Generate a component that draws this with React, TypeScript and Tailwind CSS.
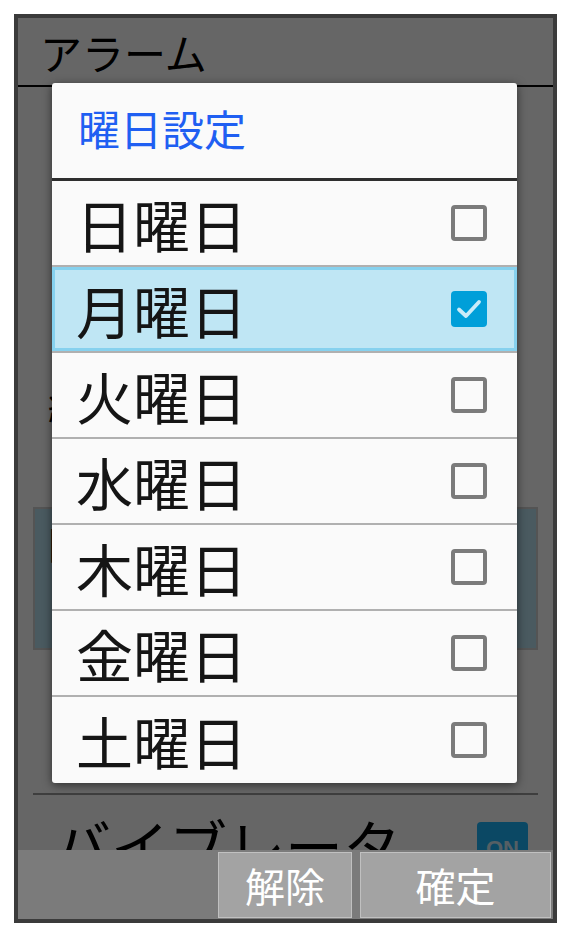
import React from "react";

const days = ["日曜日", "月曜日", "火曜日", "水曜日", "木曜日", "金曜日", "土曜日"];
const jp = { fontFamily: '"Noto Sans CJK JP", "Noto Sans", sans-serif' };

function Check({ checked }: { checked: boolean }) {
  if (checked) {
    return (
      <div className="w-[36px] h-[36px] rounded-[4px] bg-[#009fd9] flex items-center justify-center">
        <svg width="30" height="30" viewBox="0 0 30 30" fill="none">
          <path d="M5 15.5 L12 22 L25 8" stroke="#c9ecf9" strokeWidth="3.8" strokeLinecap="round" strokeLinejoin="round" />
        </svg>
      </div>
    );
  }
  return <div className="w-[36px] h-[36px] rounded-[4px] border-4 border-[#7b7b7b] bg-[#fafafa]" />;
}

export default function App() {
  const [selected, setSelected] = React.useState<string[]>(["月曜日"]);
  const focused = "月曜日";

  const toggle = (d: string) =>
    setSelected((s) => (s.includes(d) ? s.filter((x) => x !== d) : [...s, d]));

  return (
    <div className="w-[571px] h-[938px] bg-white pt-[14px] pl-[14px]" style={jp}>
      <div className="relative w-[543px] h-[909px] border-4 border-[#3b3b3b] flex flex-col overflow-hidden">
        {/* alarm screen underneath */}
        <header className="h-[69px] shrink-0 bg-white border-b-2 border-black flex items-center pl-[22px]">
          <span className="text-[42px] leading-none text-black">アラーム</span>
        </header>

        <div className="flex-1 min-h-0 overflow-hidden bg-white px-[15px] flex flex-col">
          <div className="h-[300px] shrink-0" />
          <div className="h-[120px] shrink-0 pl-[15px] text-[38px] leading-none text-black">繰</div>
          <div className="h-[143px] shrink-0 bg-[#b9e1f0] border-2 border-[#d2d2d2] pl-[13px] pt-[14px] text-[44px] leading-none text-black">
            曜
          </div>
          <div className="h-[143px] shrink-0 pl-[16px] pt-[92px] text-[32px] leading-none text-black">ス</div>
          <div className="h-[2px] shrink-0 bg-[#9b9b9b]" />
          <div className="shrink-0 flex items-start justify-between pl-[20px] pr-[10px] pt-[20px]">
            <span className="text-[58px] leading-none text-black whitespace-nowrap">バイブレータ</span>
            <span
              className="mt-[7px] w-[51px] h-[52px] rounded-[4px] bg-[#1cb4fa] text-[#d6eefa] text-[22px] font-bold flex items-start justify-center pt-[16px] leading-none"
              style={{ fontFamily: '"Liberation Sans", sans-serif' }}
            >
              ON
            </span>
          </div>
        </div>

        {/* dim overlay */}
        <div className="absolute left-0 right-0 top-0 bottom-[69px] bg-black/60" />

        {/* action bar */}
        <div className="relative h-[69px] shrink-0 bg-[#7b7b7b] flex items-end justify-end gap-[8px] pr-[2px] pb-px">
          <button className="w-[134px] h-[66px] bg-[#a3a3a3] border border-[#c0c0c0] text-white text-[40px] leading-none">
            解除
          </button>
          <button className="w-[191px] h-[66px] bg-[#a3a3a3] border border-[#c0c0c0] text-white text-[40px] leading-none">
            確定
          </button>
        </div>

        {/* day picker dialog */}
        <div className="absolute left-[34px] top-[65px] w-[465px] bg-[#fafafa] rounded-[3px] shadow-[0_2px_10px_rgba(0,0,0,0.55)] overflow-hidden">
          <div className="h-[98px] flex items-center pl-[26px] pb-[6px] border-b-[3px] border-[#2e2e2e]">
            <span className="text-[42px] leading-none text-[#1f5ff2]">曜日設定</span>
          </div>
          {days.map((d, i) => (
            <div
              key={d}
              onClick={() => toggle(d)}
              className={`h-[86px] flex items-center justify-between pl-[24px] pr-[30px] cursor-pointer ${
                i < days.length - 1 ? "border-b-2 border-[#b0b0b0]" : ""
              } ${d === focused ? "bg-[#bfe6f4] shadow-[inset_0_0_0_3px_#86d1ee]" : ""}`}
            >
              <span className="text-[57px] leading-none text-[#151515]">{d}</span>
              <Check checked={selected.includes(d)} />
            </div>
          ))}
        </div>
      </div>
    </div>
  );
}
